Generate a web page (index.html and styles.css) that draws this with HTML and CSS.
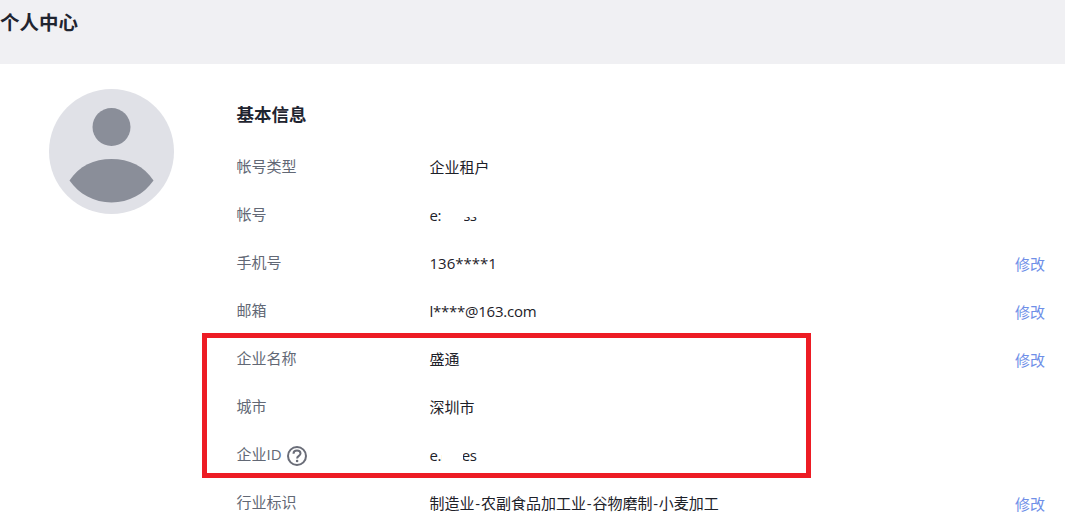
FILE: index.html
```html
<!DOCTYPE html>
<html lang="zh-CN">
<head>
<meta charset="utf-8">
<title>个人中心</title>
<link rel="stylesheet" href="styles.css">
</head>
<body>
<header class="page-header"><h1 class="page-title">个人中心</h1></header>
<main class="content">
  <div class="avatar-col">
    <svg class="avatar" width="125" height="125" viewBox="0 0 125 125" aria-hidden="true">
      <circle cx="62.5" cy="62.5" r="62.5" fill="#e0e1e7"/>
      <circle cx="62.5" cy="38" r="19" fill="#8a8e99"/>
      <path d="M20.5 91.5C30 77 45 70 62.5 70S95 77 104.5 91.5C95 105 80 113.500 62.500 113.500S30 105 20.500 91.500Z" fill="#8a8e99"/>
    </svg>
  </div>
  <section class="info">
    <h2 class="section-title">基本信息</h2>
    <div class="row"><span class="label">帐号类型</span><span class="value">企业租户</span></div>
    <div class="row"><span class="label">帐号</span><span class="value tight">e:xxxss<i class="mask mask-account"></i><i class="mask mask-account-top"></i></span></div>
    <div class="row"><span class="label">手机号</span><span class="value">136****11<i class="mask mask-phone"></i></span><a class="edit">修改</a></div>
    <div class="row"><span class="label">邮箱</span><span class="value email">l****@163.com</span><a class="edit">修改</a></div>
    <div class="row"><span class="label">企业名称</span><span class="value">盛通</span><a class="edit">修改</a></div>
    <div class="row"><span class="label">城市</span><span class="value">深圳市</span></div>
    <div class="row"><span class="label label-icon">企业ID
      <svg class="help" width="20" height="20" viewBox="0 0 20 20" aria-hidden="true">
        <circle cx="10" cy="10" r="9" fill="none" stroke="#6a6d78" stroke-width="2"/>
        <path d="M6.500 7.800C6.500 5.700 8.100 4.600 10 4.600S13.500 5.800 13.500 7.600C13.500 9.800 10.100 10 10.100 12.400" fill="none" stroke="#6a6d78" stroke-width="2"/>
        <circle cx="10.100" cy="15" r="1.300" fill="#6a6d78"/>
      </svg></span><span class="value tight">e:mxes<i class="mask mask-id"></i><i class="mask mask-id-top"></i></span></div>
    <div class="row"><span class="label">行业标识</span><span class="value">制造业<span class="dash">-</span>农副食品加工业<span class="dash">-</span>谷物磨制<span class="dash">-</span>小麦加工</span><a class="edit">修改</a></div>
  </section>
</main>
<div class="highlight"></div>
</body>
</html>
```
FILE: styles.css
```css
* { box-sizing: border-box; }
html, body { margin: 0; padding: 0; height: 530px; overflow: hidden; background: #fff; }
body {
  position: relative;
  font-family: "Open Sans", "Noto Sans CJK SC", sans-serif;
  font-size: 15px;
  color: #1d2129;
}
.page-header { height: 64px; background: #f0f0f3; }
.page-title { margin: 0; padding-top: 8px; font-size: 19.500px; line-height: 28px; font-weight: 700; font-family: "Noto Sans CJK SC", sans-serif; color: #1f2430; }
.content { display: flex; padding: 25px 20px 0 49px; }
.avatar-col { width: 187.500px; flex: none; }
.avatar { display: block; }
.info { flex: 1; }
.section-title { margin: 0; height: 54px; padding-top: 12px; font-size: 17.500px; line-height: 26px; font-weight: 700; font-family: "Noto Sans CJK SC", sans-serif; color: #1f2430; }
.row { display: flex; height: 48px; align-items: center; }
.label { width: 193px; flex: none; color: #626875; line-height: 22px; position: relative; top: -1px; }
.label-icon { display: flex; align-items: center; gap: 5px; white-space: nowrap; }
.help { position: relative; top: 2px; }
.value { flex: 1; line-height: 22px; position: relative; }
.tight { letter-spacing: -0.45px; }
.email { letter-spacing: -0.25px; }
.dash { margin: 0 0.8px; }
.edit { color: #6f8fe8; line-height: 22px; position: relative; top: 1px; }
.mask { position: absolute; background: #fff; }
.mask-account { left: 11px; top: 0; width: 23px; height: 22px; }
.mask-account-top { left: 30px; top: 0; width: 24px; height: 13px; }
.mask-phone { left: 68px; top: 0; width: 50px; height: 22px; }
.mask-id { left: 12px; top: 0; width: 21px; height: 22px; }
.mask-id-top { left: 8px; top: 0; width: 8px; height: 11px; }
.highlight { position: absolute; left: 202px; top: 333px; width: 609px; height: 145px; border: 5px solid #ed1c24; }
```
